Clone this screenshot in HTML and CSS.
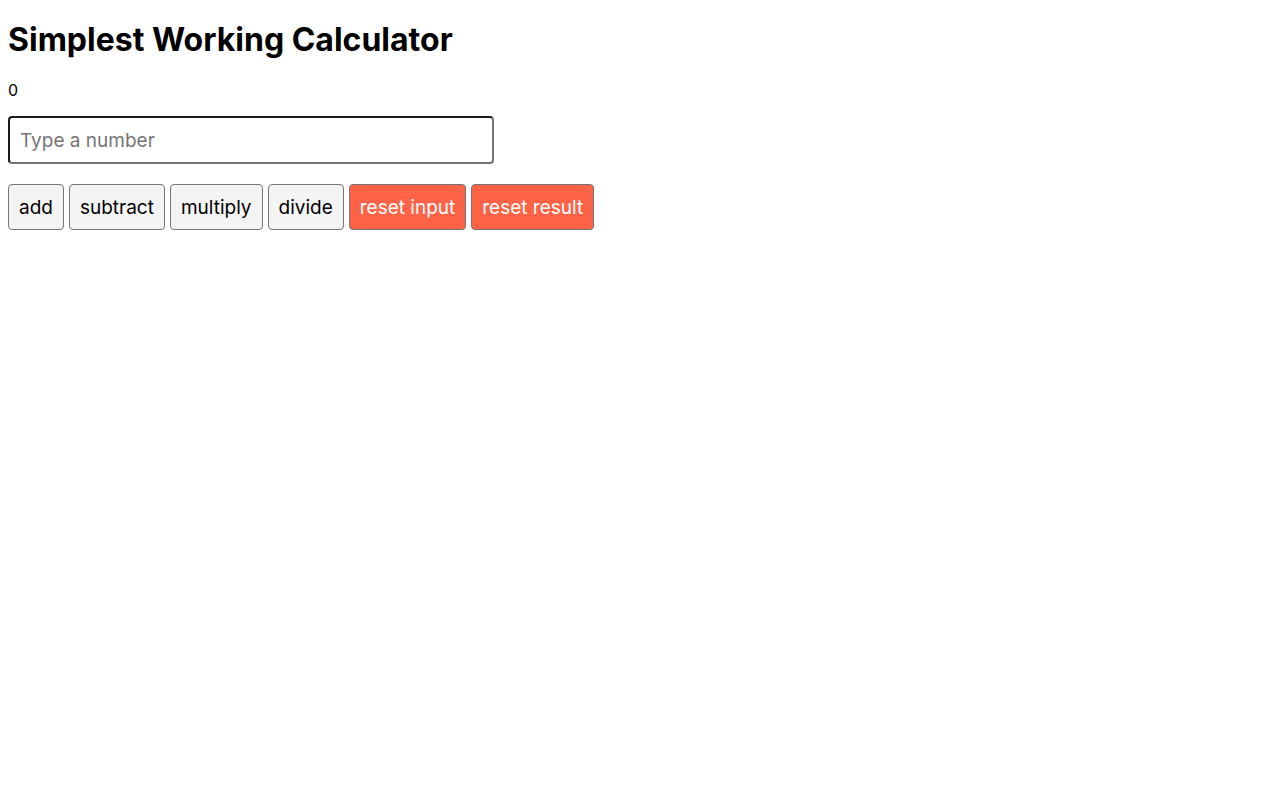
FILE: index.html
```html
<!DOCTYPE html>
<html>
<head>
<meta charset="utf-8">
<title>Simplest Working Calculator</title>
<link rel="stylesheet" href="styles.css">
</head>
<body>
<main class="app">
  <h1 class="title">Simplest Working Calculator</h1>
  <p class="result">0</p>
  <form class="calc">
    <input class="number-input" type="number" placeholder="Type a number">
    <div class="actions">
      <button type="button" class="btn">add</button>
      <button type="button" class="btn">subtract</button>
      <button type="button" class="btn">multiply</button>
      <button type="button" class="btn">divide</button>
      <button type="button" class="btn btn-reset">reset input</button>
      <button type="button" class="btn btn-reset">reset result</button>
    </div>
  </form>
</main>
</body>
</html>
```

FILE: styles.css
```css
body {
  margin: 8px;
  font-family: Inter, "Noto Sans", sans-serif;
  color: #000;
  background: #fff;
}

.title {
  font-size: 32px;
  font-weight: 700;
  margin: 12px 0 21px;
}

.result {
  font-size: 16px;
  margin: 16px 0;
}

.calc {
  display: flex;
  flex-direction: column;
  gap: 20px;
  align-items: flex-start;
}

.number-input {
  box-sizing: border-box;
  width: 486px;
  height: 48px;
  padding: 10px;
  font-family: Inter, "Noto Sans", sans-serif;
  font-size: 19px;
  border: 2px solid;
  border-color: #1c1c1c #767676 #767676 #1c1c1c;
  border-radius: 4px;
  outline: none;
}

.number-input::placeholder {
  color: #757575;
}

.actions {
  display: flex;
  gap: 5px;
}

.btn {
  box-sizing: border-box;
  height: 46px;
  padding: 0 10px;
  font-family: Inter, "Noto Sans", sans-serif;
  font-size: 19px;
  color: #000;
  background: #f4f4f4;
  border: 1px solid #767676;
  border-radius: 4px;
}

.btn-reset {
  background: #ff6347;
  color: #fff;
}
```
